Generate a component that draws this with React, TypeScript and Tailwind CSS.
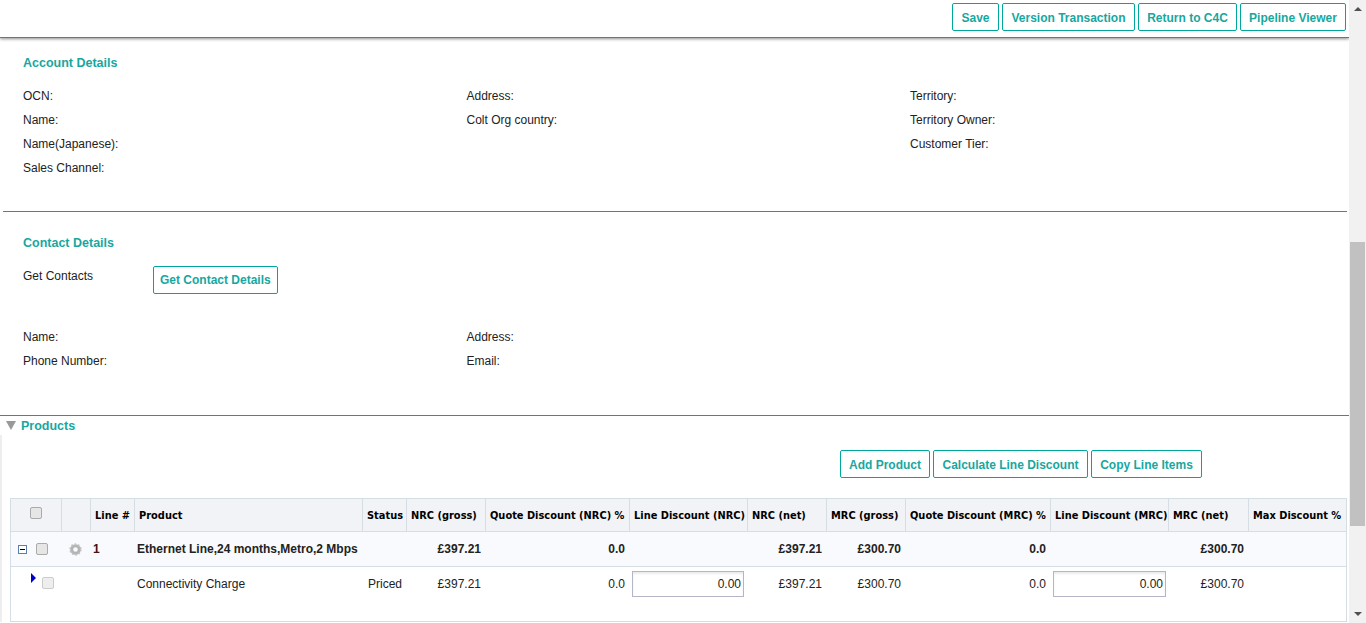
const headers = [
  { label: '', w: 'w-[50px]' },
  { label: '', w: 'w-[29px]' },
  { label: 'Line #', w: 'w-[44px]' },
  { label: 'Product', w: 'w-[228px]' },
  { label: 'Status', w: 'w-[44px]' },
  { label: 'NRC (gross)', w: 'w-[79px]' },
  { label: 'Quote Discount (NRC) %', w: 'w-[144px]' },
  { label: 'Line Discount (NRC)', w: 'w-[118px]' },
  { label: 'NRC (net)', w: 'w-[79px]' },
  { label: 'MRC (gross)', w: 'w-[79px]' },
  { label: 'Quote Discount (MRC) %', w: 'w-[145px]' },
  { label: 'Line Discount (MRC)', w: 'w-[118px]' },
  { label: 'MRC (net)', w: 'w-[80px]' },
  { label: 'Max Discount %', w: 'w-[98px]' },
];

function TealButton({ children, w }: { children: string; w: string }) {
  return (
    <button
      className={`flex h-[28px] items-center justify-center rounded-[2px] border border-[#00a79d] bg-white pt-[1px] text-[12px] font-bold text-[#17a79f] ${w}`}
    >
      {children}
    </button>
  );
}

function Field({ label }: { label: string }) {
  return <div className="h-[24px] text-[12px] leading-[24px] text-[#222]">{label}</div>;
}

function Check({ light }: { light?: boolean }) {
  return (
    <span
      className={`inline-block h-[12px] w-[12px] rounded-[2px] border ${light ? 'border-[#ccc] bg-[#eee]' : 'border-[#aaa] bg-[#e6e6e6]'}`}
    />
  );
}

function Gear() {
  return (
    <svg width="13" height="13" viewBox="0 0 13 13">
      <circle cx="6.5" cy="6.5" r="3.8" fill="none" stroke="#b4b4b4" strokeWidth="3" />
      <circle cx="6.5" cy="6.5" r="5.4" fill="none" stroke="#c4c4c4" strokeWidth="1.6" strokeDasharray="1.7 1.7" />
    </svg>
  );
}

function Amount({ value }: { value: string }) {
  return <td className="pr-[4px] text-right text-[12px] text-[#222]">{value}</td>;
}

function BoldAmount({ value }: { value: string }) {
  return (
    <td className="border-b border-[#d5dde5] pr-[4px] text-right text-[12px] font-bold text-[#222]">{value}</td>
  );
}

function DiscountInput({ w }: { w: string }) {
  return (
    <td className="pl-[3px]">
      <input
        readOnly
        value="0.00"
        className={`block h-[26px] border border-[#b5b5c8] pr-[2px] text-right font-['Liberation_Sans',sans-serif] text-[12px] text-[#222] shadow-[inset_0_2px_2px_rgba(0,0,0,0.08)] outline-none ${w}`}
      />
    </td>
  );
}

export default function App() {
  return (
    <div className="flex h-[623px] w-[1366px] overflow-hidden bg-white font-['Liberation_Sans',Arial,sans-serif]">
      <div className="w-[1349px] shrink-0">
        {/* Top action bar */}
        <div className="flex h-[38px] items-start justify-end gap-[3px] border-b border-[#00a79d] pt-[3px] pr-[3px] shadow-[0_1px_3px_rgba(0,0,0,0.45)]">
          <TealButton w="w-[47px]">Save</TealButton>
          <TealButton w="w-[133px]">Version Transaction</TealButton>
          <TealButton w="w-[99px]">Return to C4C</TealButton>
          <TealButton w="w-[106px]">Pipeline Viewer</TealButton>
        </div>

        {/* Account Details */}
        <div className="ml-[3px] h-[174px] w-[1344px] border-b border-[#00a79d] pt-[18px] pl-[20px]">
          <h2 className="text-[12.5px] leading-[15px] font-bold text-[#17a79f]">Account Details</h2>
          <div className="mt-[13px] grid grid-cols-[443.5px_443.5px_1fr]">
            <div>
              <Field label="OCN:" />
              <Field label="Name:" />
              <Field label="Name(Japanese):" />
              <Field label="Sales Channel:" />
            </div>
            <div>
              <Field label="Address:" />
              <Field label="Colt Org country:" />
            </div>
            <div>
              <Field label="Territory:" />
              <Field label="Territory Owner:" />
              <Field label="Customer Tier:" />
            </div>
          </div>
        </div>

        {/* Contact Details */}
        <div className="ml-[3px] h-[203px] pt-[24px] pl-[20px]">
          <h2 className="text-[12.5px] leading-[15px] font-bold text-[#17a79f]">Contact Details</h2>
          <div className="mt-[15px] flex items-start">
            <div className="w-[130px] pt-[1px] text-[12px] leading-[18px] text-[#222]">Get Contacts</div>
            <button className="flex h-[28px] items-center rounded-[2px] border border-[#00a79d] px-[6px] text-[12px] font-bold text-[#17a79f]">
              Get Contact Details
            </button>
          </div>
          <div className="mt-[31px] grid grid-cols-[443.5px_1fr]">
            <div>
              <Field label="Name:" />
              <Field label="Phone Number:" />
            </div>
            <div>
              <Field label="Address:" />
              <Field label="Email:" />
            </div>
          </div>
        </div>

        {/* Products */}
        <div className="border-t border-[#00a79d]">
          <div className="flex h-[19px] items-center pl-[6px]">
            <span className="h-0 w-0 border-x-[5px] border-t-[9px] border-x-transparent border-t-[#999]" />
            <span className="ml-[5px] pt-[2px] text-[12.5px] font-bold text-[#17a79f]">Products</span>
          </div>
          <div className="w-[1347px] border-l-2 border-[#eee] pl-[8px]">
            <div className="flex h-[63px] items-start justify-end gap-[3px] pt-[15px] pr-[145px]">
              <TealButton w="w-[90px]">Add Product</TealButton>
              <TealButton w="w-[155px]">Calculate Line Discount</TealButton>
              <TealButton w="w-[111px]">Copy Line Items</TealButton>
            </div>
            <table className="w-[1335px] table-fixed border-separate border-spacing-0 border-x border-b border-[#d5dde5]">
              <thead>
                <tr className="h-[34px] bg-[#f1f3f7]">
                  {headers.map((h, i) => (
                    <th
                      key={i}
                      className={`${h.w} overflow-hidden border-t border-b border-l border-[#d5dde5] pt-[2px] pl-[4px] text-left font-['DejaVu_Sans',sans-serif] text-[9.85px] font-bold whitespace-nowrap text-black first:border-l-0`}
                    >
                      {i === 0 ? (
                        <div className="flex justify-center pr-[4px] pb-[7px]">
                          <Check />
                        </div>
                      ) : (
                        h.label
                      )}
                    </th>
                  ))}
                </tr>
              </thead>
              <tbody>
                <tr className="h-[35px] bg-[#f9fafd]">
                  <td className="border-b border-[#d5dde5]">
                    <div className="flex items-center pl-[7px]">
                      <span className="flex h-[9px] w-[9px] items-center justify-center border border-[#5a7fa8] bg-white">
                        <span className="h-[1px] w-[5px] bg-black" />
                      </span>
                      <span className="ml-[9px] flex">
                        <Check />
                      </span>
                    </div>
                  </td>
                  <td className="border-b border-[#d5dde5] pl-[8px]">
                    <div className="flex">
                      <Gear />
                    </div>
                  </td>
                  <td className="border-b border-[#d5dde5] pl-[3px] text-[12px] font-bold text-[#4a1010]">1</td>
                  <td
                    colSpan={2}
                    className="border-b border-[#d5dde5] pl-[3px] text-[12px] font-bold whitespace-nowrap text-[#222]"
                  >
                    Ethernet Line,24 months,Metro,2 Mbps
                  </td>
                  <BoldAmount value="£397.21" />
                  <BoldAmount value="0.0" />
                  <td className="border-b border-[#d5dde5]" />
                  <BoldAmount value="£397.21" />
                  <BoldAmount value="£300.70" />
                  <BoldAmount value="0.0" />
                  <td className="border-b border-[#d5dde5]" />
                  <BoldAmount value="£300.70" />
                  <td className="border-b border-[#d5dde5]" />
                </tr>
                <tr className="h-[54px] align-top [&>td]:pt-[4px] [&>td]:leading-[26px]">
                  <td>
                    <div className="flex pl-[20px]">
                      <span className="mt-[2px] h-0 w-0 border-y-[5px] border-l-[5px] border-y-transparent border-l-[#0000cc]" />
                      <span className="mt-[6px] ml-[6px] flex">
                        <Check light />
                      </span>
                    </div>
                  </td>
                  <td />
                  <td />
                  <td className="pl-[3px] text-[12px] text-[#222]">Connectivity Charge</td>
                  <td className="pl-[6px] text-[12px] text-[#222]">Priced</td>
                  <Amount value="£397.21" />
                  <Amount value="0.0" />
                  <DiscountInput w="w-[112px]" />
                  <Amount value="£397.21" />
                  <Amount value="£300.70" />
                  <Amount value="0.0" />
                  <DiscountInput w="w-[113px]" />
                  <Amount value="£300.70" />
                  <td />
                </tr>
              </tbody>
            </table>
          </div>
        </div>
      </div>

      {/* Scrollbar */}
      <div className="flex w-[17px] flex-col items-center bg-[#f1f1f1]">
        <span className="mt-[7px] h-0 w-0 border-x-[4px] border-b-[4px] border-x-transparent border-b-[#505050]" />
        <div className="mt-[231px] h-[284px] w-[15px] bg-[#c1c1c1]" />
        <div className="flex-1" />
        <span className="mb-[7px] h-0 w-0 border-x-[4px] border-t-[4px] border-x-transparent border-t-[#505050]" />
      </div>
    </div>
  );
}
